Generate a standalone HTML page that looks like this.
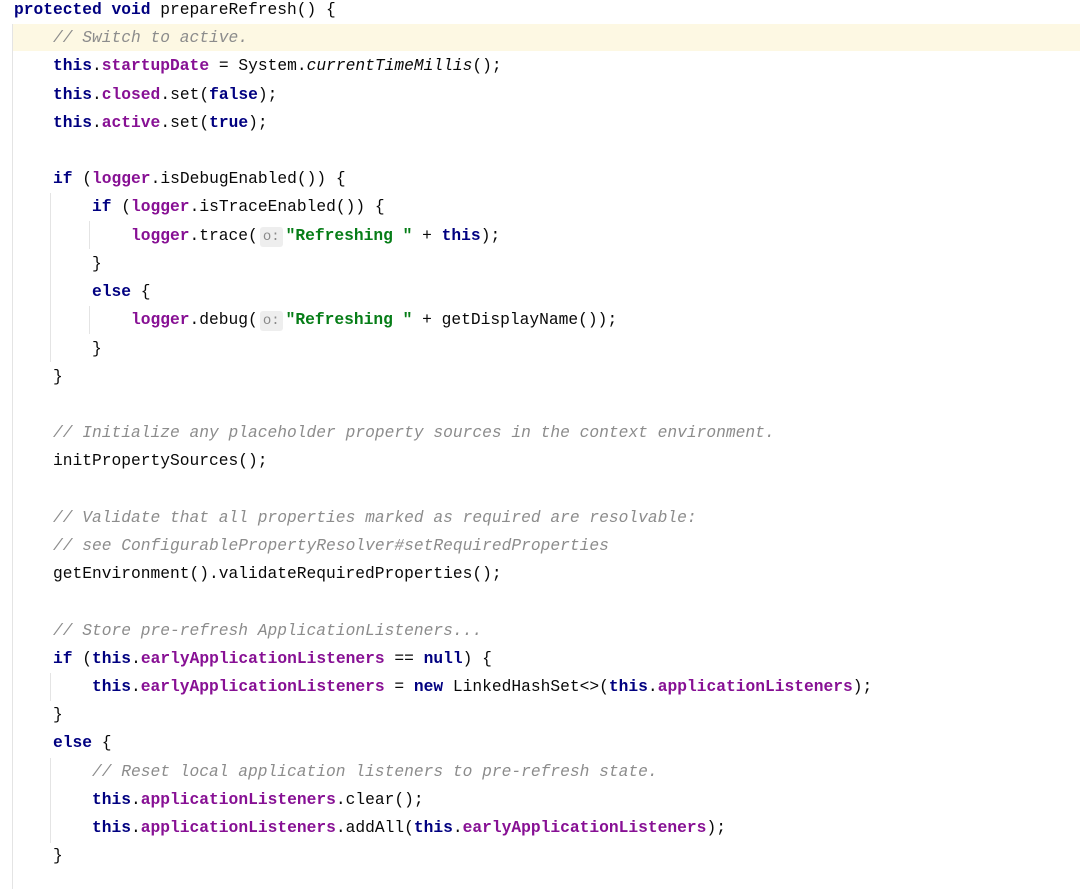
<!DOCTYPE html>
<html><head><style>
body{margin:0;width:1080px;height:889px;background:#fff;overflow:hidden;position:relative;font-family:"Liberation Mono",monospace;font-size:16.25px;color:#080808}
.l{position:absolute;left:14px;height:28px;line-height:28px;white-space:pre}
.k{color:#0033b3;font-weight:bold;color:#000080}
.f{color:#871094;font-weight:bold}
.s{color:#067d17;font-weight:bold}
.c{color:#8c8c8c;font-style:italic}
.i{font-style:italic}
.h{display:inline-block;background:#eeeeee;color:#8a8a8a;border-radius:3px;font-size:14px;line-height:20px;padding:0 3px;margin:0 3px 0 2px}
.g{position:absolute;width:1px;background:#e4e4e4}
.hl{position:absolute;left:12px;top:24px;width:1068px;height:27px;background:#fdf8e3}
</style></head><body>
<div class="hl"></div>
<div class="g" style="left:12px;top:24px;height:865px"></div>
<div class="g" style="left:50px;top:193px;height:169px"></div>
<div class="g" style="left:89px;top:221px;height:28px"></div>
<div class="g" style="left:89px;top:306px;height:28px"></div>
<div class="g" style="left:50px;top:673px;height:28px"></div>
<div class="g" style="left:50px;top:758px;height:85px"></div>
<div class="l" style="top:-4px"><span class="k">protected void</span> prepareRefresh() {</div>
<div class="l" style="top:24px">    <span class="c">// Switch to active.</span></div>
<div class="l" style="top:52px">    <span class="k">this</span>.<span class="f">startupDate</span> = System.<span class="i">currentTimeMillis</span>();</div>
<div class="l" style="top:81px">    <span class="k">this</span>.<span class="f">closed</span>.set(<span class="k">false</span>);</div>
<div class="l" style="top:109px">    <span class="k">this</span>.<span class="f">active</span>.set(<span class="k">true</span>);</div>
<div class="l" style="top:165px">    <span class="k">if</span> (<span class="f">logger</span>.isDebugEnabled()) {</div>
<div class="l" style="top:193px">        <span class="k">if</span> (<span class="f">logger</span>.isTraceEnabled()) {</div>
<div class="l" style="top:222px">            <span class="f">logger</span>.trace(<span class="h">o:</span><span class="s">"Refreshing "</span> + <span class="k">this</span>);</div>
<div class="l" style="top:250px">        }</div>
<div class="l" style="top:278px">        <span class="k">else</span> {</div>
<div class="l" style="top:306px">            <span class="f">logger</span>.debug(<span class="h">o:</span><span class="s">"Refreshing "</span> + getDisplayName());</div>
<div class="l" style="top:335px">        }</div>
<div class="l" style="top:363px">    }</div>
<div class="l" style="top:419px">    <span class="c">// Initialize any placeholder property sources in the context environment.</span></div>
<div class="l" style="top:447px">    initPropertySources();</div>
<div class="l" style="top:504px">    <span class="c">// Validate that all properties marked as required are resolvable:</span></div>
<div class="l" style="top:532px">    <span class="c">// see ConfigurablePropertyResolver#setRequiredProperties</span></div>
<div class="l" style="top:560px">    getEnvironment().validateRequiredProperties();</div>
<div class="l" style="top:617px">    <span class="c">// Store pre-refresh ApplicationListeners...</span></div>
<div class="l" style="top:645px">    <span class="k">if</span> (<span class="k">this</span>.<span class="f">earlyApplicationListeners</span> == <span class="k">null</span>) {</div>
<div class="l" style="top:673px">        <span class="k">this</span>.<span class="f">earlyApplicationListeners</span> = <span class="k">new</span> LinkedHashSet&lt;&gt;(<span class="k">this</span>.<span class="f">applicationListeners</span>);</div>
<div class="l" style="top:701px">    }</div>
<div class="l" style="top:729px">    <span class="k">else</span> {</div>
<div class="l" style="top:758px">        <span class="c">// Reset local application listeners to pre-refresh state.</span></div>
<div class="l" style="top:786px">        <span class="k">this</span>.<span class="f">applicationListeners</span>.clear();</div>
<div class="l" style="top:814px">        <span class="k">this</span>.<span class="f">applicationListeners</span>.addAll(<span class="k">this</span>.<span class="f">earlyApplicationListeners</span>);</div>
<div class="l" style="top:842px">    }</div>
</body></html>
